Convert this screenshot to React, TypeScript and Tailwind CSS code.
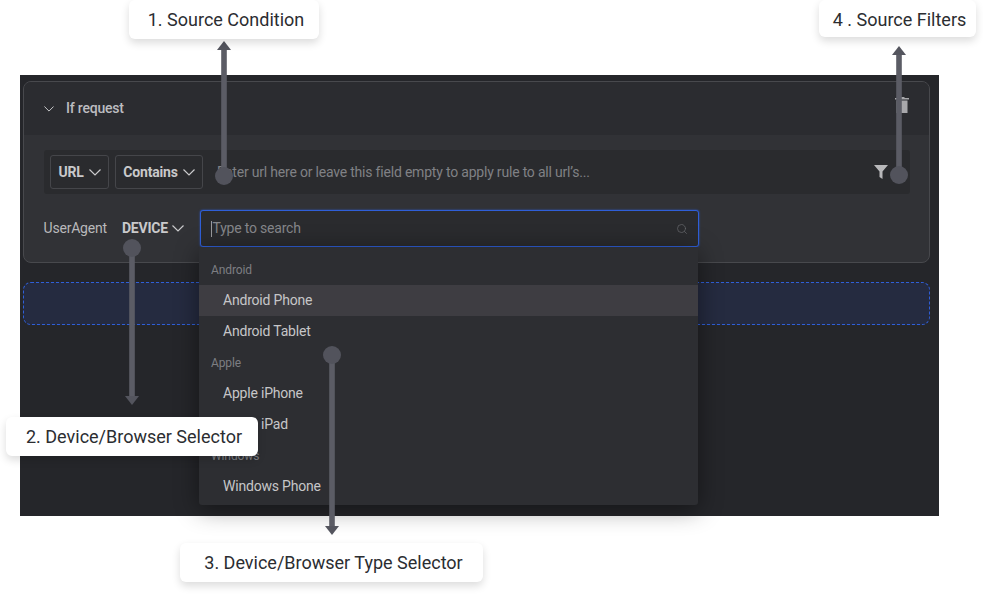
import React from 'react';
import { Search } from 'lucide-react';

const Caret = ({ size = 12 }: { size?: number }) => (
  <svg width={size} height={size / 2 + 1} viewBox="0 0 12 7" fill="none" stroke="currentColor" strokeWidth="1.200" className="shrink-0">
    <path d="M0.500 0.500L6 6l5.500-5.500" />
  </svg>
);

const Callout = ({ className, children }: { className: string; children: React.ReactNode }) => (
  <div className={`absolute z-30 flex items-center justify-center pl-[4px] bg-white rounded-md text-[18px] text-[#2b2d31] shadow-[0_4px_8px_rgba(0,0,0,0.14)] ${className}`}>
    {children}
  </div>
);

// dot and arrow, drawn over the screenshot
const Pointer = ({ x, top, height, dir }: { x: number; top: number; height: number; dir: 'up' | 'down' }) => (
  <svg
    className="absolute z-20 overflow-visible"
    width="20"
    height={height}
    viewBox={`0 0 20 ${height}`}
    style={{ left: x - 10, top }}
  >
    {dir === 'up' ? (
      <>
        <rect x="7.200" y="8" width="5.600" height={height - 12} fill="#5b5c65" />
        <path d="M3 9L10 0l7 9z" fill="#54555e" />
        <circle cx="10" cy={height - 9} r="9" fill="#52535c" />
      </>
    ) : (
      <>
        <rect x="7.200" y="8" width="5.600" height={height - 16} fill="#5b5c65" />
        <path d={`M3 ${height - 9}L10 ${height}l7 -9z`} fill="#54555e" />
        <circle cx="10" cy="9" r="9" fill="#52535c" />
      </>
    )}
  </svg>
);

const Option = ({ label, active }: { label: string; active?: boolean }) => (
  <div className={`h-[31px] flex items-center pl-[24px] text-[14px] tracking-[-0.2px] text-[#c6c6c8] ${active ? 'bg-[#3e3d42]' : ''}`}>
    {label}
  </div>
);

const GroupLabel = ({ label }: { label: string }) => (
  <div className="h-[31px] flex items-center pl-[12px] text-[12px] tracking-[-0.1px] text-[#7d7e83]">{label}</div>
);

export default function App() {
  return (
    <div className="relative w-[983px] h-[594px] bg-white overflow-hidden font-['Roboto',sans-serif]">
      <div className="absolute left-[19.500px] top-[75px] w-[919.500px] h-[441px] bg-[#25262a] pt-[6px] pl-[3.500px] pr-[9px]">
        <div className="h-[182px] rounded-lg border border-[#48494d] bg-[#313236] overflow-hidden">
          <div className="h-[53px] bg-[#2b2c30] flex items-center pl-[20px] pr-[20px] text-[#c8c8ca]">
            <Caret size={10} />
            <span className="ml-[12px] text-[14px] tracking-[-0.2px] font-medium text-[#bdbdc0]">If request</span>
            <svg className="ml-auto -mt-[7px]" width="14" height="16" viewBox="0 0 14 16" fill="#a8a8ab">
              <path d="M4.500 0h5v1h4.500v1.500H0V1h4.500zM1.500 3.500h11V16h-11z" />
            </svg>
          </div>
          <div className="pt-[15px] px-[19.500px]">
            <div className="h-[44px] bg-[#2a2b2e] rounded-[3px] flex items-center pl-[6.500px] pr-[22px]">
              <div className="w-[59px] h-[34px] border border-[#45464a] rounded-[3px] flex items-center justify-center gap-[5px] text-[14px] tracking-[-0.2px] font-bold text-[#c9c9cb]">
                URL <Caret />
              </div>
              <div className="ml-[6px] w-[88px] h-[34px] border border-[#45464a] rounded-[3px] flex items-center justify-center gap-[5px] text-[14px] tracking-[-0.2px] font-bold text-[#c9c9cb]">
                Contains <Caret />
              </div>
              <span className="ml-[14px] text-[14px] tracking-[-0.2px] text-[#808185]">Enter url here or leave this field empty to apply rule to all url’s...</span>
              <svg className="ml-auto" width="14" height="14" viewBox="0 0 14 14" fill="#b8b8ba">
                <path d="M0 0h14L8.500 6.500V14l-3-2V6.500z" />
              </svg>
            </div>
            <div className="mt-[16px] flex items-center h-[37px] text-[14px] tracking-[-0.2px]">
              <span className="text-[#b9b9bb]">UserAgent</span>
              <span className="ml-[15px] font-bold text-[#c9c9cb]">DEVICE</span>
              <span className="ml-[4px] text-[#c9c9cb]"><Caret /></span>
              <div className="ml-[16px] w-[499px] h-[37px] rounded-[3px] border border-[#2f5fd8] shadow-[0_0_2px_#2f5fd8] bg-[#2a2b2e] flex items-center pl-[10.500px] pr-[10px] text-[#85868a]">
                <span className="w-px h-[16px] bg-[#9a9a9d]" />
                <span>Type to search</span>
                <Search className="ml-auto text-[#66676b]" size={12} strokeWidth={1.500} />
              </div>
            </div>
          </div>
        </div>
        <div className="mt-[19px] h-[43px] rounded-lg border border-dashed border-[#2f5fd8] bg-[#252b40]" />
      </div>

      <div className="absolute z-10 left-[199px] top-[247px] w-[499px] h-[258px] rounded-b-[3px] bg-[#2d2e32] shadow-[0_4px_24px_rgba(0,0,0,0.45)] pt-[7px]">
        <GroupLabel label="Android" />
        <Option label="Android Phone" active />
        <Option label="Android Tablet" />
        <GroupLabel label="Apple" />
        <Option label="Apple iPhone" />
        <Option label="Apple iPad" />
        <GroupLabel label="Windows" />
        <Option label="Windows Phone" />
      </div>

      <Pointer x={224} top={41} height={144} dir="up" />
      <Pointer x={132} top={239} height={166} dir="down" />
      <Pointer x={331.500} top={346} height={189} dir="down" />
      <Pointer x={898.500} top={46} height={138} dir="up" />

      <Callout className="left-[129px] top-0 w-[190px] h-[39px]">1. Source Condition</Callout>
      <Callout className="left-[819px] top-0 w-[157px] h-[37px] pt-px">4 . Source Filters</Callout>
      <Callout className="left-[6px] top-[417px] w-[252px] h-[39px]">2. Device/Browser Selector</Callout>
      <Callout className="left-[180px] top-[543px] w-[303px] h-[39px]">3. Device/Browser Type Selector</Callout>
    </div>
  );
}
